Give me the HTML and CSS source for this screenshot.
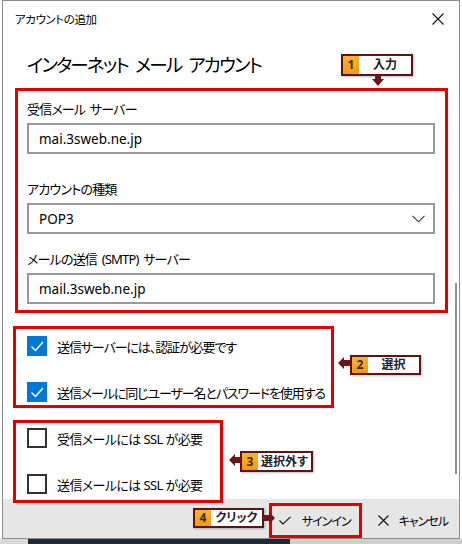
FILE: index.html
```html
<!DOCTYPE html>
<html lang="ja">
<head>
  <meta charset="UTF-8" />
  <title>アカウントの追加</title>
  <link rel="stylesheet" href="styles.css">
</head>
<body>
  <div class="dialog">
    <div class="titlebar">
      <span>アカウントの追加</span>
      <svg class="close" width="12" height="12" viewBox="0 0 12 12"><path d="M0.5 0.5 L11.5 11.5 M11.5 0.5 L0.5 11.5" stroke="#111" stroke-width="1.1" fill="none"/></svg>
    </div>

    <div class="content">
      <h1>インターネット メール アカウント</h1>

      <!-- step 1: server fields -->
      <div class="mark mark-fields">
        <div class="field">
          <label>受信メール サーバー</label>
          <div class="textbox">mai.3sweb.ne.jp</div>
        </div>
        <div class="field field-type">
          <label>アカウントの種類</label>
          <div class="textbox select">
            <span>POP3</span>
            <svg width="13" height="8" viewBox="0 0 13 8"><path d="M0.5 0.8 L6.5 6.8 L12.5 0.8" stroke="#333" stroke-width="1.1" fill="none"/></svg>
          </div>
        </div>
        <div class="field field-smtp">
          <label>メールの送信 (SMTP) サーバー</label>
          <div class="textbox">mail.3sweb.ne.jp</div>
        </div>
      </div>

      <!-- step 2 -->
      <div class="mark mark-auth">
        <div class="check-row">
          <span class="box checked"><svg width="20" height="20" viewBox="0 0 20 20"><path d="M4.5 10.5 L8.5 14.5 L16 6" stroke="#fff" stroke-width="1.5" fill="none"/></svg></span>
          <span>送信サーバーには、認証が必要です</span>
        </div>
        <div class="check-row">
          <span class="box checked"><svg width="20" height="20" viewBox="0 0 20 20"><path d="M4.5 10.5 L8.5 14.5 L16 6" stroke="#fff" stroke-width="1.5" fill="none"/></svg></span>
          <span>送信メールに同じユーザー名とパスワードを使用する</span>
        </div>
      </div>

      <!-- step 3 -->
      <div class="mark mark-ssl">
        <div class="check-row">
          <span class="box"></span>
          <span>受信メールには SSL が必要</span>
        </div>
        <div class="check-row">
          <span class="box"></span>
          <span>送信メールには SSL が必要</span>
        </div>
      </div>
    </div>

    <div class="footer">
      <button class="btn btn-signin">
        <svg width="12" height="9" viewBox="0 0 12 9"><path d="M0.5 4.5 L4 8 L11.5 0.8" stroke="#111" stroke-width="1.1" fill="none"/></svg>
        <span>サインイン</span>
      </button>
      <button class="btn btn-cancel">
        <svg width="11" height="11" viewBox="0 0 11 11"><path d="M0.5 0.5 L10.5 10.5 M10.5 0.5 L0.5 10.5" stroke="#111" stroke-width="1.1" fill="none"/></svg>
        <span>キャンセル</span>
      </button>
    </div>

    <div class="scroll-thumb"></div>

    <!-- callouts -->
    <div class="note note-1"><span class="num">1</span><span class="txt">入力</span></div>
    <svg class="arrow arrow-1" width="12" height="11" viewBox="0 0 12 11"><polygon points="3,0 9,0 9,4 12,4 6,11 0,4 3,4" fill="#6b1717"/></svg>

    <div class="note note-2"><span class="num">2</span><span class="txt">選択</span></div>
    <svg class="arrow arrow-2" width="12" height="12" viewBox="0 0 12 12"><polygon points="0,6 6,0 6,3 12,3 12,9 6,9 6,12" fill="#6b1717"/></svg>

    <div class="note note-3"><span class="num">3</span><span class="txt">選択外す</span></div>
    <svg class="arrow arrow-3" width="12" height="12" viewBox="0 0 12 12"><polygon points="0,6 6,0 6,3 12,3 12,9 6,9 6,12" fill="#6b1717"/></svg>

    <div class="note note-4"><span class="num">4</span><span class="txt">クリック</span></div>
    <svg class="arrow arrow-4" width="12" height="12" viewBox="0 0 12 12"><polygon points="12,6 6,0 6,3 0,3 0,9 6,9 6,12" fill="#6b1717"/></svg>
  </div>
  <div class="desk"></div>
</body>
</html>
```

FILE: styles.css
```css
body {
  margin: 0;
  background: #fff;
  font-family: "Noto Sans", "Noto Sans CJK JP", sans-serif;
  font-feature-settings: "palt";
  color: #000;
}
.dialog {
  position: relative;
  margin-left: 2px;
  width: 458px;
  height: 539px;
  box-sizing: border-box;
  border: 1px solid #8c8c8c;
  background: #fff;
  display: flex;
  flex-direction: column;
}
.titlebar {
  height: 35px;
  flex-shrink: 0;
  display: flex;
  align-items: center;
  justify-content: space-between;
  padding: 0 15px 0 12px;
  font-size: 11.5px;
  letter-spacing: -0.4px;
}
.content {
  flex: 1 1 0;
  min-height: 0;
}
h1 {
  margin: 15px 0 0 24px;
  font-size: 18.5px;
  font-weight: 400;
  line-height: 28px;
  letter-spacing: -1.8px;
  word-spacing: 4px;
}
.mark {
  position: relative;
  z-index: 1;
  box-sizing: border-box;
  border: 3px solid #e00000;
  margin-left: 10px;
}
.mark-fields {
  width: 433px;
  margin: 9px 0 0 12px;
  padding: 8px 0 6px 9px;
}
.field label {
  display: block;
  font-size: 13px;
  line-height: 20px;
  letter-spacing: -0.8px;
  word-spacing: 2px;
  margin-bottom: 4px;
}
.field-type {
  margin-top: 25px;
}
.field-smtp {
  margin-top: 15px;
}
.textbox {
  display: flex;
  align-items: center;
  width: 408px;
  height: 31px;
  box-sizing: border-box;
  border: 2px solid #999;
  padding-left: 10px;
  font-size: 13.5px;
  background: #fff;
}
.select {
  justify-content: space-between;
  padding-right: 8px;
}
.mark-auth {
  width: 321px;
  margin-top: 13px;
  padding: 7px 0 3px 11px;
}
.mark-auth .check-row {
  letter-spacing: -1.1px;
}
.mark-ssl {
  width: 210px;
  margin-top: 12px;
  padding: 5px 0 6px 11px;
}
.check-row {
  display: flex;
  align-items: center;
  height: 20px;
  font-size: 13px;
  letter-spacing: -0.6px;
  white-space: nowrap;
}
.check-row + .check-row {
  margin-top: 26px;
}
.box {
  width: 20px;
  height: 20px;
  box-sizing: border-box;
  border: 2px solid #333;
  margin-right: 10px;
  flex-shrink: 0;
}
.box.checked {
  border: none;
  background: #0078d7;
}
.box svg {
  display: block;
}
.footer {
  height: 39px;
  flex-shrink: 0;
  background: #e6e6e6;
  display: flex;
  align-items: flex-start;
  justify-content: flex-end;
  padding: 4px 11px 0 0;
  box-sizing: border-box;
}
.btn {
  display: flex;
  align-items: center;
  border: none;
  background: none;
  font-family: inherit;
  font-feature-settings: "palt";
  font-size: 12px;
  letter-spacing: -1px;
  color: #000;
  padding: 0;
}
.btn-signin {
  height: 35px;
  box-sizing: border-box;
  border: 3px solid #e00000;
  padding: 0 8px 0 7px;
  gap: 11px;
}
.btn-cancel {
  height: 35px;
  margin-left: 16px;
  gap: 10px;
}
.scroll-thumb {
  position: absolute;
  left: 452px;
  top: 282px;
  width: 2px;
  height: 191px;
  background: #8f8f8f;
}
.note {
  position: absolute;
  z-index: 2;
  display: flex;
  box-sizing: border-box;
  border: 2px solid #5a1616;
  background: #fff;
  font-size: 12px;
  font-weight: 700;
  line-height: 1;
  color: #222;
  box-shadow: 1px 1px 2px rgba(0, 0, 0, 0.25);
}
.note .num {
  width: 16px;
  background: linear-gradient(#f9b233, #f39a12);
  display: flex;
  align-items: center;
  justify-content: center;
  color: #3a2a10;
}
.note .txt {
  flex: 1;
  display: flex;
  align-items: center;
  justify-content: center;
}
.note-1 { left: 338px; top: 53px; width: 72px; height: 22px; }
.note-2 { left: 347px; top: 354px; width: 71px; height: 20px; }
.note-3 { left: 237px; top: 450px; width: 73px; height: 21px; }
.note-3 .txt { justify-content: flex-start; padding-left: 3px; }
.note-4 { left: 190px; top: 507px; width: 71px; height: 20px; }
.arrow {
  position: absolute;
  z-index: 2;
}
.arrow-1 { left: 369px; top: 74px; }
.arrow-2 { left: 335px; top: 356px; }
.arrow-3 { left: 226px; top: 453px; }
.arrow-4 { left: 260px; top: 511px; }
.desk {
  height: 5px;
  background: linear-gradient(to right, #d9d9d9 0 28px, #1f2a38 28px 290px, #cfcfcf 290px);
}
```
